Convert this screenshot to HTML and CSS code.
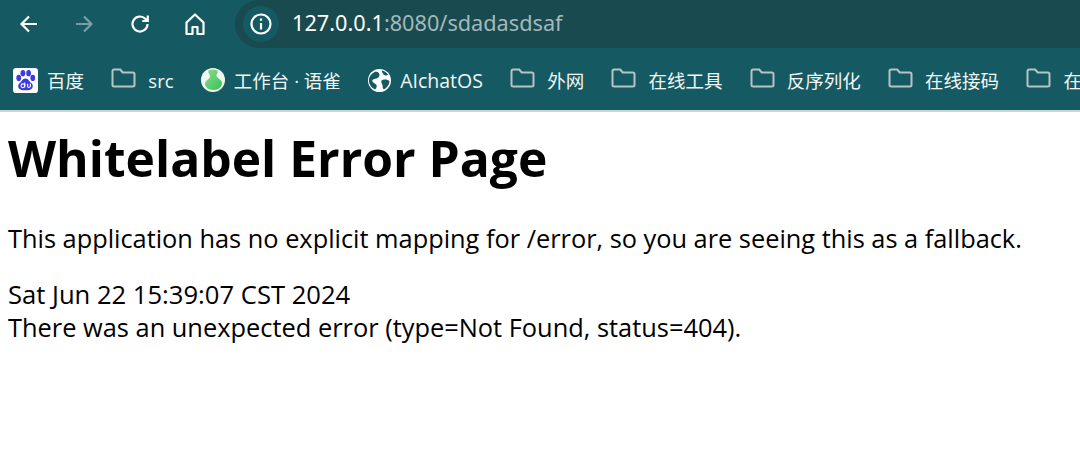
FILE: index.html
```html
<!DOCTYPE html>
<html lang="en">
<head>
<meta charset="utf-8">
<title>Whitelabel Error Page</title>
<link rel="stylesheet" href="styles.css">
</head>
<body>
<header class="chrome">
  <div class="toolbar">
    <button class="nav"><svg viewBox="0 0 24 24" class="nav-icon"><path d="M20 12H5M12 4.500 4.500 12l7.500 7.500"/></svg></button>
    <button class="nav dim"><svg viewBox="0 0 24 24" class="nav-icon"><path d="M4 12h15M12 4.500l7.500 7.500-7.500 7.500"/></svg></button>
    <button class="nav"><svg viewBox="0 0 24 24" class="nav-icon"><path d="M19.500 12a7.500 7.500 0 1 1-2.200-5.300L19.500 9M19.800 3.500V9h-5.500"/></svg></button>
    <button class="nav"><svg viewBox="0 0 24 24" class="nav-icon home"><path d="M3.500 10.500 12 2.500l8.500 8V22h-6v-7h-5v7h-6z"/></svg></button>
    <div class="omnibox">
      <span class="info"><svg viewBox="0 0 24 24" class="info-icon"><circle cx="12" cy="12" r="9.500"/><path d="M12 11v6.500M12 6.500v2.200"/></svg></span>
      <span class="url">127.0.0.1<span class="url-rest">:8080/sdadasdsaf</span></span>
    </div>
  </div>
  <nav class="bookmarks">
    <a class="mark"><svg class="fav" viewBox="0 0 24 24"><rect width="24" height="24" rx="3" fill="#fff"/><g fill="#3b3be0"><ellipse cx="5.500" cy="9.500" rx="2.300" ry="3"/><ellipse cx="9.500" cy="5" rx="2.300" ry="3"/><ellipse cx="15" cy="5" rx="2.300" ry="3"/><ellipse cx="19" cy="9.500" rx="2.300" ry="3"/><path d="M12 10c-3 0-3.500 3-5.500 4.500S4 20 8 21c2 .4 6 .4 8 0 4-1 3.500-5 1.500-6.500S15 10 12 10z"/></g><g fill="none" stroke="#fff" stroke-width="1.100"><circle cx="9.500" cy="17" r="1.800"/><path d="M11.300 14v4.500M14 15v2.500q0 1.200 1.200 1.200t1.500-1.200V15"/></g></svg><span>百度</span></a>
    <a class="mark"><svg class="folder" viewBox="0 0 25 20"><path d="M1.500 17V3.200q0-1.700 1.700-1.700h6l2.500 3h10.100q1.700 0 1.700 1.700V17q0 1.500-1.700 1.500H3.200q-1.700 0-1.700-1.500z"/></svg><span>src</span></a>
    <a class="mark"><svg class="fav yuque" viewBox="0 0 24 24"><defs><linearGradient id="yq" x1="0" x2="1" y1="0" y2="1"><stop offset="0" stop-color="#8fdc84"/><stop offset="1" stop-color="#35c25f"/></linearGradient></defs><circle cx="12" cy="12" r="12" fill="#f1f6f0"/><path d="M7.500 2.500c3-1.500 7-1.500 9 .5 1 2-1.500 3-1 5 .5 2.500 5 3 5.500 7 .3 3.500-3.500 7-8.500 7s-8.500-3-8.500-6c0-4 4.500-4.500 5-7.500.3-2-2.500-3.500-1.500-6z" fill="url(#yq)"/></svg><span>工作台 · 语雀</span></a>
    <a class="mark"><svg class="fav globe" viewBox="0 0 24 24"><circle cx="12" cy="12" r="12" fill="#fff"/><path d="M8 2.500C11 3 13 5 11.500 8c-1.500 2.500-6 1.500-7 4-.5 2 3.500 3 4.500 5 .5 2-.5 3-1.500 4.500C3.500 19.500 1 16 1 12 1 7.500 4 4 8 2.500zM15 11.500c3-1 6-.5 7.500 1.500-.5 3.500-2.500 6.500-5.500 8-2 .5-1.500-3-2-4.500-1-2-2-4.500 0-5zM14.500 1.500c2.500.5 5 2 6.500 4.500-1.500 1-3.500 1-4.500 0s-2-3-2-4.500z" fill="#155a62"/></svg><span class="latin">AIchatOS</span></a>
    <a class="mark"><svg class="folder" viewBox="0 0 25 20"><path d="M1.500 17V3.200q0-1.700 1.700-1.700h6l2.500 3h10.100q1.700 0 1.700 1.700V17q0 1.500-1.700 1.500H3.200q-1.700 0-1.700-1.500z"/></svg><span>外网</span></a>
    <a class="mark"><svg class="folder" viewBox="0 0 25 20"><path d="M1.500 17V3.200q0-1.700 1.700-1.700h6l2.500 3h10.100q1.700 0 1.700 1.700V17q0 1.500-1.700 1.500H3.200q-1.700 0-1.700-1.500z"/></svg><span>在线工具</span></a>
    <a class="mark"><svg class="folder" viewBox="0 0 25 20"><path d="M1.500 17V3.200q0-1.700 1.700-1.700h6l2.500 3h10.100q1.700 0 1.700 1.700V17q0 1.500-1.700 1.500H3.200q-1.700 0-1.700-1.500z"/></svg><span>反序列化</span></a>
    <a class="mark"><svg class="folder" viewBox="0 0 25 20"><path d="M1.500 17V3.200q0-1.700 1.700-1.700h6l2.500 3h10.100q1.700 0 1.700 1.700V17q0 1.500-1.700 1.500H3.200q-1.700 0-1.700-1.500z"/></svg><span>在线接码</span></a>
    <a class="mark"><svg class="folder" viewBox="0 0 25 20"><path d="M1.500 17V3.200q0-1.700 1.700-1.700h6l2.500 3h10.100q1.700 0 1.700 1.700V17q0 1.500-1.700 1.500H3.200q-1.700 0-1.700-1.500z"/></svg><span>在</span></a>
  </nav>
</header>
<main class="page">
  <h1 class="title">Whitelabel Error Page</h1>
  <p class="lead">This application has no explicit mapping for /error, so you are seeing this as a fallback.</p>
  <div class="when">Sat Jun 22 15:39:07 CST 2024</div>
  <div class="detail">There was an unexpected error (type=Not Found, status=404).</div>
</main>
</body>
</html>
```
FILE: styles.css
```css
* { box-sizing: border-box; }
html, body { margin: 0; padding: 0; }
body {
  width: 1080px;
  height: 470px;
  overflow: hidden;
  background: #fff;
  color: #000;
  font-family: "Open Sans", "Noto Sans", "Noto Sans CJK SC", sans-serif;
}
.chrome { background: #155a62; height: 112px; border-bottom: 2px solid #c8d6d8; overflow: hidden; }
.toolbar { display: flex; align-items: center; height: 48px; padding-left: 1px; }
.nav {
  width: 55.500px; height: 48px; padding: 0; border: 0; background: none;
  display: flex; align-items: center; justify-content: center;
}
.nav.dim { opacity: .42; }
.nav-icon { width: 24px; height: 24px; fill: none; stroke: #fff; stroke-width: 2.200; }
.home { stroke-linejoin: round; }
.omnibox {
  flex: 1; height: 48px; margin-left: 12px; padding-left: 8px;
  display: flex; align-items: center;
  background: #194a50; border-radius: 24px 0 0 24px;
}
.info {
  width: 36px; height: 36px; border-radius: 50%; background: #155a62;
  display: flex; align-items: center; justify-content: center;
}
.info-icon { width: 24px; height: 24px; fill: none; stroke: #fff; stroke-width: 2.200; }
.url { margin: -3px 0 0 13px; color: #fff; font-size: 21.700px; white-space: nowrap; font-family: "Noto Sans", sans-serif; }
.url-rest { color: #a3b9bb; }
.bookmarks {
  display: flex; align-items: center; height: 62px; padding: 2px 0 0 13px; gap: 27.300px;
  white-space: nowrap;
}
.mark { display: flex; align-items: center; gap: 9px; color: #f2f6f6; font-size: 18.500px; }
.latin { font-size: 19.500px; }
.fav { width: 25px; height: 25px; flex: none; }
.yuque { width: 24px; height: 24px; }
.globe { width: 23px; height: 23px; }
.folder { width: 25px; height: 20px; flex: none; margin-right: 3px; fill: none; stroke: #b6c4c6; stroke-width: 2; margin-bottom: 4px; }
.page { padding: 0 8px; }
.title { margin: 14px 0 0; font-size: 49.750px; line-height: 65px; font-weight: 700; }
.lead { margin: 31px 0 0; font-size: 25.350px; line-height: 33px; }
.when { margin-top: 23px; font-size: 25.600px; line-height: 33px; }
.detail { font-size: 25.400px; line-height: 33px; }
```
